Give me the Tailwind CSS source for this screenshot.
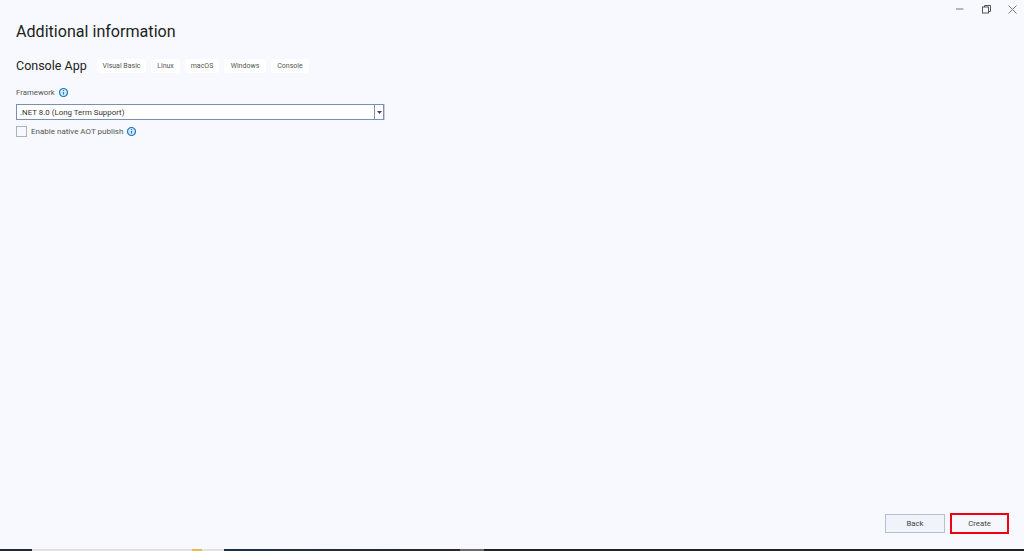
<!DOCTYPE html>
<html lang="en">
<head>
  <meta charset="UTF-8" />
  <title>Additional information</title>
  <script src="https://cdn.jsdelivr.net/npm/@tailwindcss/browser@4"></script>
</head>
<body class="bg-[#f7f9fe] h-[551px] w-[1024px] overflow-hidden flex flex-col font-['Roboto',sans-serif] text-[#1e1e1e]">
  <!-- window buttons -->
  <div class="relative flex-grow flex flex-col pl-4 pr-[15px]">
    <div class="absolute top-[5px] right-[7px] flex items-center gap-[17px]">
      <svg width="9" height="9" viewBox="0 0 9 9" fill="none" stroke="#777" stroke-width="1"><path d="M0 4h7.5" /></svg>
      <svg width="9" height="9" viewBox="0 0 9 9" fill="none" stroke="#555" stroke-width="1"><path d="M2.5 2V0.5h6V6.5H7" /><rect x="0.5" y="2" width="6" height="6" /></svg>
      <svg width="9" height="9" viewBox="0 0 9 9" fill="none" stroke="#777" stroke-width="1"><path d="M0.5 0.5l8 8M8.5 0.5l-8 8" /></svg>
    </div>

    <h1 class="mt-[21px] h-[22px] text-[16.1px] leading-[22px] text-[#222]">Additional information</h1>

    <div class="mt-[13px] flex items-center h-[20px]">
      <h2 class="text-[12.5px] leading-[20px] w-[81px] text-[#222]">Console App</h2>
      <div class="flex gap-[5px] text-[7px] text-[#555]">
        <span class="bg-white rounded-[3px] h-[14px] w-[49px] text-center leading-[14px]">Visual Basic</span>
        <span class="bg-white rounded-[3px] h-[14px] w-[29px] text-center leading-[14px]">Linux</span>
        <span class="bg-white rounded-[3px] h-[14px] w-[34px] text-center leading-[14px]">macOS</span>
        <span class="bg-white rounded-[3px] h-[14px] w-[42px] text-center leading-[14px]">Windows</span>
        <span class="bg-white rounded-[3px] h-[14px] w-[38px] text-center leading-[14px]">Console</span>
      </div>
    </div>

    <div class="mt-[10px] flex items-center gap-[4px] h-[13px] text-[7.8px] text-[#555]">
      <span>Framework</span>
      <svg width="9" height="9" viewBox="0 0 9 9" fill="none"><circle cx="4.5" cy="4.5" r="4" stroke="#1f7fc4" stroke-width="1.2" fill="#d6e8f6" /><path d="M4.5 4v2.6M4.5 2v1" stroke="#1f7fc4" stroke-width="1.2" /></svg>
    </div>

    <div class="mt-[5px] w-[368px] h-[16px] flex bg-white border border-[#7b8fb5] shadow-[1px_0_0_#c3d0e6]">
      <span class="flex-grow pl-[3px] text-[7.9px] leading-[16px] text-[#333]">.NET 8.0 (Long Term Support)</span>
      <span class="w-[9px] border-l border-[#7b8fb5] flex items-center justify-center">
        <svg width="5" height="3" viewBox="0 0 5 3"><path d="M0 0h5L2.5 3z" fill="#444" /></svg>
      </span>
    </div>

    <div class="mt-[6px] flex items-center h-[11px] text-[8px] text-[#555]">
      <span class="w-[11px] h-[11px] border border-[#a9b3c4] bg-[#f7f9fe] mr-[4px]"></span>
      <span>Enable native AOT publish</span>
      <svg class="ml-[4px]" width="9" height="9" viewBox="0 0 9 9" fill="none"><circle cx="4.5" cy="4.5" r="4" stroke="#1f7fc4" stroke-width="1.2" fill="#d6e8f6" /><path d="M4.5 4v2.6M4.5 2v1" stroke="#1f7fc4" stroke-width="1.2" /></svg>
    </div>

    <div class="mt-auto mb-[15px] flex justify-end items-center gap-[5px] text-[7.8px] text-[#444]">
      <button class="w-[60px] h-[19px] bg-[#f0f3fa] border border-[#b4c0d4]">Back</button>
      <button class="w-[59px] h-[21px] bg-[#f5f7fc] border-2 border-[#f00010]">Create</button>
    </div>
  </div>

  <!-- strip of the taskbar at the bottom edge -->
  <div class="h-[2px] flex shrink-0">
    <div class="w-[32px] bg-[#1f2a38]"></div>
    <div class="w-[192px] bg-[#dfe1e5] flex pl-[160px]"><div class="w-[10px] bg-[#eeb84c]"></div></div>
    <div class="w-[200px] bg-gradient-to-r from-[#1c3146] to-[#25282c]"></div>
    <div class="w-[36px] bg-[#25282c]"></div>
    <div class="w-[24px] bg-[#6c6a6c]"></div>
    <div class="flex-grow bg-[#222]"></div>
  </div>
</body>
</html>
